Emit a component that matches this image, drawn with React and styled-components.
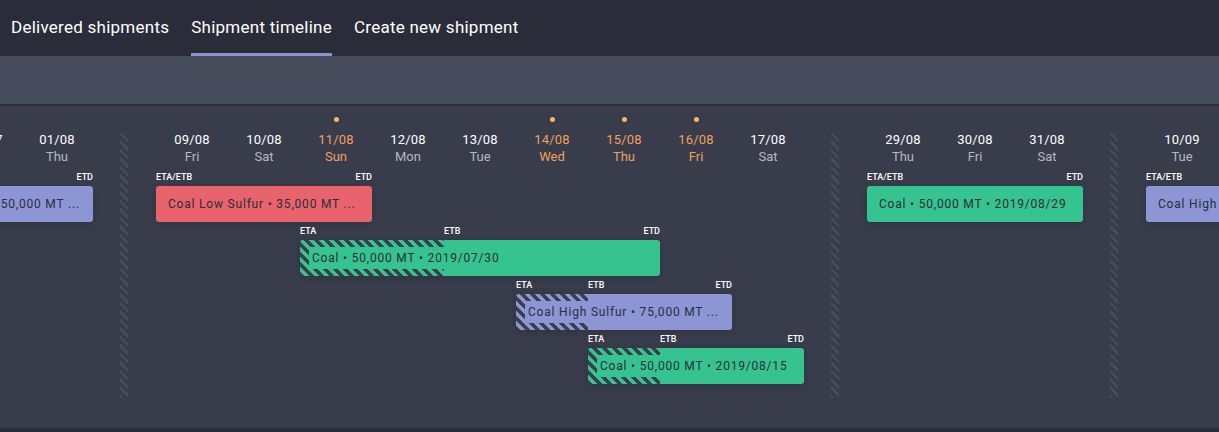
import React from 'react'
import styled, { createGlobalStyle } from 'styled-components'

const COL = 72

const colors = {
  green: '#35c48f',
  red: '#e8636c',
  purple: '#8c96d4',
}

const GlobalStyle = createGlobalStyle`
  html, body {
    margin: 0;
    padding: 0;
    background: #393c4b;
    font-family: Roboto, "Noto Sans", "Liberation Sans", sans-serif;
    overflow: hidden;
  }
`

const groups = [
  {
    days: [
      { date: '31/07', day: 'Wed' },
      { date: '01/08', day: 'Thu' },
    ],
    bars: [
      { row: 1, start: 1, span: 2, color: 'purple', text: 'Coal • 50,000 MT ...' },
    ],
  },
  {
    days: [
      { date: '09/08', day: 'Fri' },
      { date: '10/08', day: 'Sat' },
      { date: '11/08', day: 'Sun', holiday: true },
      { date: '12/08', day: 'Mon' },
      { date: '13/08', day: 'Tue' },
      { date: '14/08', day: 'Wed', holiday: true },
      { date: '15/08', day: 'Thu', holiday: true },
      { date: '16/08', day: 'Fri', holiday: true },
      { date: '17/08', day: 'Sat' },
    ],
    bars: [
      { row: 1, start: 1, span: 3, color: 'red', text: 'Coal Low Sulfur • 35,000 MT ...' },
      { row: 2, start: 3, span: 5, color: 'green', hatch: 2, text: 'Coal • 50,000 MT • 2019/07/30' },
      { row: 3, start: 6, span: 3, color: 'purple', hatch: 1, text: 'Coal High Sulfur • 75,000 MT ...' },
      { row: 4, start: 7, span: 3, color: 'green', hatch: 1, text: 'Coal • 50,000 MT • 2019/08/15' },
    ],
  },
  {
    days: [
      { date: '29/08', day: 'Thu' },
      { date: '30/08', day: 'Fri' },
      { date: '31/08', day: 'Sat' },
    ],
    bars: [
      { row: 1, start: 1, span: 3, color: 'green', text: 'Coal • 50,000 MT • 2019/08/29' },
    ],
  },
  {
    days: [
      { date: '10/09', day: 'Tue' },
      { date: '11/09', day: 'Wed' },
      { date: '12/09', day: 'Thu' },
    ],
    bars: [
      { row: 1, start: 1, span: 3, color: 'purple', text: 'Coal High Sulfur • 75,000 MT ...' },
    ],
  },
]

const App = () => {
  return (
    <Page>
      <GlobalStyle />
      <Header>
        <Tab>Delivered shipments</Tab>
        <Tab $active>Shipment timeline</Tab>
        <Tab>Create new shipment</Tab>
      </Header>
      <Toolbar />
      <Content>
        <Track>
          {groups.map((g, gi) => (
            <React.Fragment key={gi}>
              {gi > 0 && <Separator />}
              <Group $cols={g.days.length}>
                {g.days.map((d, i) => (
                  <DateCell key={d.date} $col={i + 1} $holiday={d.holiday}>
                    <DotSlot>{d.holiday && <Dot />}</DotSlot>
                    <DateText>{d.date}</DateText>
                    <DayText $holiday={d.holiday}>{d.day}</DayText>
                  </DateCell>
                ))}
                {g.bars.map((b, i) => {
                  const hatchWidth = b.hatch ? b.hatch * COL : 0
                  return (
                    <BarItem key={i} $row={b.row + 1} $start={b.start} $span={b.span}>
                      {b.hatch ? (
                        <LabelRow $hatch={hatchWidth}>
                          <Label>ETA</Label>
                          <Label>ETB</Label>
                          <Label $right>ETD</Label>
                        </LabelRow>
                      ) : (
                        <LabelRow>
                          <Label>ETA/ETB</Label>
                          <Label $right>ETD</Label>
                        </LabelRow>
                      )}
                      <Bar $color={colors[b.color]} $hatch={hatchWidth}>
                        <BarText $color={colors[b.color]}>{b.text}</BarText>
                      </Bar>
                    </BarItem>
                  )
                })}
              </Group>
            </React.Fragment>
          ))}
        </Track>
      </Content>
      <Footer />
    </Page>
  )
}

const Page = styled.div`
  display: flex;
  flex-direction: column;
  height: 432px;
  width: 1219px;
  overflow: hidden;
`

const Header = styled.div`
  display: flex;
  align-items: stretch;
  gap: 22px;
  height: 56px;
  padding-left: 11px;
  background-color: #2a2d39;
  flex-shrink: 0;
`

const Tab = styled.div`
  display: flex;
  align-items: center;
  font-size: 17px;
  color: #ffffff;
  letter-spacing: 0.25px;
  border-bottom: 3px solid ${p => (p.$active ? '#8b93cf' : 'transparent')};
`

const Toolbar = styled.div`
  height: 48px;
  background-color: #474c5c;
  border-bottom: 2px solid #2f323e;
  flex-shrink: 0;
`

const Content = styled.div`
  flex: 1;
  background-color: #393c4b;
  overflow: hidden;
`

const Track = styled.div`
  display: flex;
  align-items: flex-start;
  margin-left: -51px;
  width: max-content;
`

const Separator = styled.div`
  width: 8px;
  height: 265px;
  margin: 27px 28px 0 27px;
  flex-shrink: 0;
  background: repeating-linear-gradient(
    45deg,
    #474b5c 0 2.5px,
    transparent 2.5px 6px
  );
`

const Group = styled.div`
  display: grid;
  grid-template-columns: repeat(${p => p.$cols}, ${COL}px);
  grid-template-rows: 65px repeat(4, 54px);
`

const DateCell = styled.div`
  grid-row: 1;
  grid-column: ${p => p.$col};
  display: flex;
  flex-direction: column;
  align-items: center;
  padding-top: 8px;
  color: ${p => (p.$holiday ? '#eda35c' : '#ffffff')};
`

const DotSlot = styled.div`
  height: 10px;
  display: flex;
  align-items: center;
  justify-content: center;
  margin-bottom: 8px;
`

const Dot = styled.span`
  width: 5px;
  height: 5px;
  border-radius: 50%;
  background-color: #f6b46a;
`

const DateText = styled.div`
  font-size: 13px;
  line-height: 15px;
  letter-spacing: 0.2px;
`

const DayText = styled.div`
  font-size: 13px;
  line-height: 15px;
  margin-top: 2px;
  color: ${p => (p.$holiday ? '#eda35c' : '#b4b8c6')};
`

const BarItem = styled.div`
  grid-row: ${p => p.$row};
  grid-column: ${p => p.$start} / span ${p => p.$span};
  display: flex;
  flex-direction: column;
`

const LabelRow = styled.div`
  display: grid;
  grid-template-columns: ${p => (p.$hatch ? `${p.$hatch}px 1fr auto` : '1fr auto')};
  height: 12px;
  margin-bottom: 3px;
`

const Label = styled.span`
  font-size: 9px;
  line-height: 12px;
  font-weight: 500;
  color: #ffffff;
  text-align: ${p => (p.$right ? 'right' : 'left')};
`

const Bar = styled.div`
  height: 36px;
  border-radius: 3px;
  display: flex;
  align-items: center;
  padding-left: 9px;
  overflow: hidden;
  white-space: nowrap;
  box-shadow: 0 2px 8px rgba(0, 0, 0, 0.18);
  background: ${p =>
    p.$hatch
      ? `linear-gradient(to right, transparent ${p.$hatch}px, ${p.$color} ${p.$hatch}px),
         repeating-linear-gradient(45deg, #3b3e4d 0 3.5px, ${p.$color} 3.5px 7px)`
      : p.$color};
`

const BarText = styled.span`
  background-color: ${p => p.$color};
  padding: 0 3px;
  line-height: 22px;
  font-size: 12px;
  letter-spacing: 0.8px;
  color: #2a2d3b;
`

const Footer = styled.div`
  height: 4px;
  background-color: #2a2c37;
  flex-shrink: 0;
`

export default App
